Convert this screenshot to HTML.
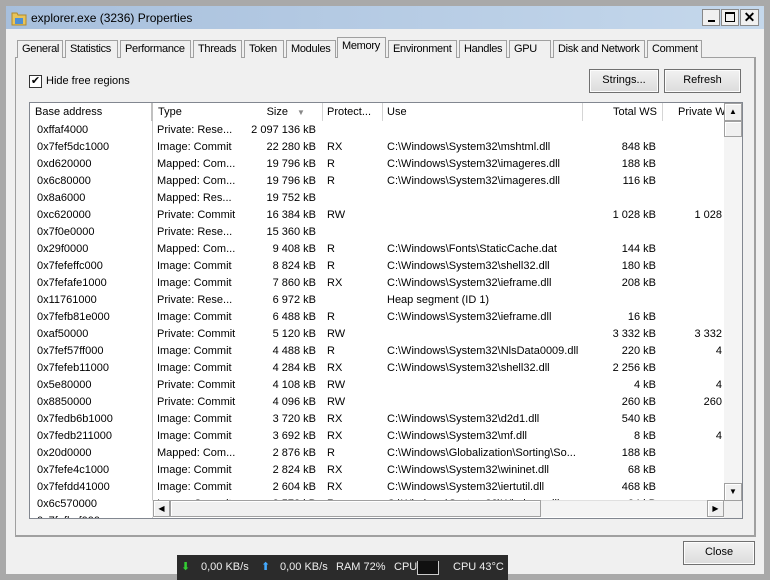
<!DOCTYPE html>
<html><head><meta charset="utf-8"><style>
*{box-sizing:border-box;margin:0;padding:0}
body{width:770px;height:580px;overflow:hidden;background:#a9a9a9;font-family:"Liberation Sans",sans-serif;font-size:11px;color:#000;position:relative}
.a{position:absolute}
.title{left:6px;top:6px;width:758px;height:23px;background:linear-gradient(90deg,#a7bfdc,#c5d8ec)}
.client{left:6px;top:29px;width:758px;height:545px;background:#f0f0f0}
.tab{position:absolute;top:40px;height:18px;border:1px solid #a0a0a0;border-bottom:none;background:#f0f0f0;padding:2px 0 0 4px;white-space:nowrap;font-size:11px;letter-spacing:-0.3px;overflow:hidden}
.btn{position:absolute;border:1px solid #707070;background:linear-gradient(#f2f2f2,#dcdcdc);text-align:center;font-size:11px;line-height:21px;box-shadow:inset 0 0 0 1px #fcfcfc}
.row{position:absolute;left:0;height:17px;line-height:17px;white-space:nowrap}
.c{position:absolute;top:0}
.r{text-align:right}
.hd{position:absolute;top:0;height:18px;line-height:18px;border-right:1px solid #d5d5d5;padding-left:5px;background:#fff;white-space:nowrap;overflow:hidden}
.sb{position:absolute;background:#f0f0f0;border:1px solid #a0a0a0;box-shadow:inset 1px 1px 0 #fff}
</style></head><body>
<div class="a title"></div>
<svg class="a" style="left:11px;top:11px" width="16" height="15"><path d="M1 2h5l1 2h8v10H1z" fill="#e8c45a" stroke="#b18a2a"/><rect x="4" y="7" width="8" height="6" fill="#4d8fd4"/></svg>
<div class="a" style="left:31px;top:11px;font-size:12px">explorer.exe (3236) Properties</div>
<div class="a" style="left:702px;top:9px;width:18px;height:17px;background:#f0f0f0;border:1px solid #888"><div class="a" style="left:5px;top:10px;width:7px;height:2px;background:#000"></div></div>
<div class="a" style="left:721px;top:9px;width:18px;height:17px;background:#f0f0f0;border:1px solid #888"><div class="a" style="left:3px;top:2px;width:10px;height:10px;border:1px solid #000;border-top-width:2px"></div></div>
<div class="a" style="left:740px;top:9px;width:19px;height:17px;background:#f0f0f0;border:1px solid #888;font-weight:bold;font-size:14px;line-height:14px;text-align:center">✕</div>
<div class="a client"></div>
<div class="a" style="left:15px;top:57px;width:741px;height:480px;background:#f0f0f0;border:1px solid #a0a0a0;border-right:2px solid #a0a0a0;border-bottom:2px solid #a0a0a0"></div>
<div class="tab" style="left:17px;width:46px">General</div>
<div class="tab" style="left:65px;width:53px">Statistics</div>
<div class="tab" style="left:120px;width:71px">Performance</div>
<div class="tab" style="left:193px;width:49px">Threads</div>
<div class="tab" style="left:244px;width:40px">Token</div>
<div class="tab" style="left:286px;width:50px">Modules</div>
<div class="tab" style="left:337px;top:37px;height:21px;width:49px;background:#f0f0f0">Memory</div>
<div class="tab" style="left:388px;width:69px">Environment</div>
<div class="tab" style="left:459px;width:48px">Handles</div>
<div class="tab" style="left:509px;width:42px">GPU</div>
<div class="tab" style="left:553px;width:92px">Disk and Network</div>
<div class="tab" style="left:647px;width:55px">Comment</div>
<div class="a" style="left:29px;top:75px;width:13px;height:13px;border:1px solid #333;background:#fff;font-size:11px;line-height:11px;text-align:center">✔</div>
<div class="a" style="left:46px;top:75px">Hide free regions</div>
<div class="btn" style="left:589px;top:69px;width:70px;height:24px">Strings...</div>
<div class="btn" style="left:664px;top:69px;width:77px;height:24px">Refresh</div>
<div class="btn" style="left:683px;top:541px;width:72px;height:24px">Close</div>
<div class="a" style="left:29px;top:102px;width:714px;height:417px;border:1px solid #828790;background:#fff;overflow:hidden">
 <div class="a" style="left:0;top:0;width:712px;height:18px;border-bottom:1px solid #d5d5d5;background:#fff">
  <div class="hd" style="left:0;width:123px;border-right:2px solid #c0c0c0">Base address</div>
  <div class="hd" style="left:123px;width:170px">Type</div>
  <div class="hd" style="left:213px;width:80px;padding:0;background:transparent;border:none;text-align:right;padding-right:35px">Size</div>
  <div class="a" style="left:267px;top:5px;color:#888;font-size:8px">▼</div>
  <div class="hd" style="left:293px;width:60px;padding-left:4px">Protect...</div>
  <div class="hd" style="left:353px;width:200px;padding-left:4px">Use</div>
  <div class="hd" style="left:553px;width:80px;text-align:right;padding-right:5px">Total WS</div>
  <div class="hd" style="left:633px;width:62px;padding-left:15px;border:none">Private W</div>
 </div>
 <div class="a" style="left:122px;top:18px;width:1px;height:400px;background:#c8c8c8"></div>
 <div class="a" id="rows" style="left:0;top:18px;width:694px;height:397px;overflow:hidden">
 </div>
 <div class="a" style="left:122px;top:397px;width:573px;height:17px;background:#f4f4f4;border-top:1px solid #e0e0e0"></div>
 <div class="sb" style="left:123px;top:397px;width:17px;height:17px;font-size:8px;line-height:15px;text-align:center">◀</div>
 <div class="sb" style="left:140px;top:397px;width:371px;height:17px"></div>
 <div class="sb" style="left:677px;top:397px;width:17px;height:17px;font-size:8px;line-height:15px;text-align:center">▶</div>
 <div class="a" style="left:694px;top:0;width:18px;height:415px;background:#f4f4f4"></div>
 <div class="sb" style="left:694px;top:0;width:18px;height:18px;font-size:8px;line-height:16px;text-align:center">▲</div>
 <div class="sb" style="left:694px;top:18px;width:18px;height:16px"></div>
 <div class="sb" style="left:694px;top:380px;width:18px;height:18px;font-size:8px;line-height:16px;text-align:center">▼</div>
 <div class="a" style="left:694px;top:398px;width:18px;height:17px;background:#f0f0f0"></div>
</div>
<div class="a" style="left:177px;top:555px;width:331px;height:25px;background:#2b2b2b;color:#eee;font-size:11px;line-height:25px;white-space:nowrap">
 <span class="a" style="left:4px;color:#3c3">⬇</span>
 <span class="a" style="left:24px">0,00 KB/s</span>
 <span class="a" style="left:84px;color:#4af">⬆</span>
 <span class="a" style="left:103px">0,00 KB/s</span>
 <span class="a" style="left:159px">RAM 72%</span>
 <span class="a" style="left:217px">CPU</span>
 <span class="a" style="left:240px;top:6px;width:22px;height:14px;border:1px solid #ccc;border-top:none;background:#111"></span>
 <span class="a" style="left:276px">CPU 43°C</span>
</div>
<script>
var d=[["0xffaf4000","Private: Rese...","2 097 136 kB","","","",""],
["0x7fef5dc1000","Image: Commit","22 280 kB","RX","C:\\Windows\\System32\\mshtml.dll","848 kB",""],
["0xd620000","Mapped: Com...","19 796 kB","R","C:\\Windows\\System32\\imageres.dll","188 kB",""],
["0x6c80000","Mapped: Com...","19 796 kB","R","C:\\Windows\\System32\\imageres.dll","116 kB",""],
["0x8a6000","Mapped: Res...","19 752 kB","","","",""],
["0xc620000","Private: Commit","16 384 kB","RW","","1 028 kB","1 028"],
["0x7f0e0000","Private: Rese...","15 360 kB","","","",""],
["0x29f0000","Mapped: Com...","9 408 kB","R","C:\\Windows\\Fonts\\StaticCache.dat","144 kB",""],
["0x7fefeffc000","Image: Commit","8 824 kB","R","C:\\Windows\\System32\\shell32.dll","180 kB",""],
["0x7fefafe1000","Image: Commit","7 860 kB","RX","C:\\Windows\\System32\\ieframe.dll","208 kB",""],
["0x11761000","Private: Rese...","6 972 kB","","Heap segment (ID 1)","",""],
["0x7fefb81e000","Image: Commit","6 488 kB","R","C:\\Windows\\System32\\ieframe.dll","16 kB",""],
["0xaf50000","Private: Commit","5 120 kB","RW","","3 332 kB","3 332"],
["0x7fef57ff000","Image: Commit","4 488 kB","R","C:\\Windows\\System32\\NlsData0009.dll","220 kB","4"],
["0x7fefeb11000","Image: Commit","4 284 kB","RX","C:\\Windows\\System32\\shell32.dll","2 256 kB",""],
["0x5e80000","Private: Commit","4 108 kB","RW","","4 kB","4"],
["0x8850000","Private: Commit","4 096 kB","RW","","260 kB","260"],
["0x7fedb6b1000","Image: Commit","3 720 kB","RX","C:\\Windows\\System32\\d2d1.dll","540 kB",""],
["0x7fedb211000","Image: Commit","3 692 kB","RX","C:\\Windows\\System32\\mf.dll","8 kB","4"],
["0x20d0000","Mapped: Com...","2 876 kB","R","C:\\Windows\\Globalization\\Sorting\\So...","188 kB",""],
["0x7fefe4c1000","Image: Commit","2 824 kB","RX","C:\\Windows\\System32\\wininet.dll","68 kB",""],
["0x7fefdd41000","Image: Commit","2 604 kB","RX","C:\\Windows\\System32\\iertutil.dll","468 kB",""],
["0x6c570000","Image: Commit","2 572 kB","R","C:\\Windows\\System32\\Windows.dll","24 kB",""],
["0x7fefbcf000","","","","","",""]];
var h="";
d.forEach(function(r,i){h+='<div class="row" style="top:'+(i*17+1)+'px;width:712px">'+
'<span class="c" style="left:7px">'+r[0]+'</span>'+
'<span class="c" style="left:127px">'+r[1]+'</span>'+
'<span class="c r" style="left:200px;width:86px">'+r[2]+'</span>'+
'<span class="c" style="left:297px">'+r[3]+'</span>'+
'<span class="c" style="left:357px">'+r[4]+'</span>'+
'<span class="c r" style="left:540px;width:86px">'+r[5]+'</span>'+
'<span class="c r" style="left:620px;width:72px">'+r[6]+'</span></div>';});
document.getElementById("rows").innerHTML=h;
</script>
</body></html>
